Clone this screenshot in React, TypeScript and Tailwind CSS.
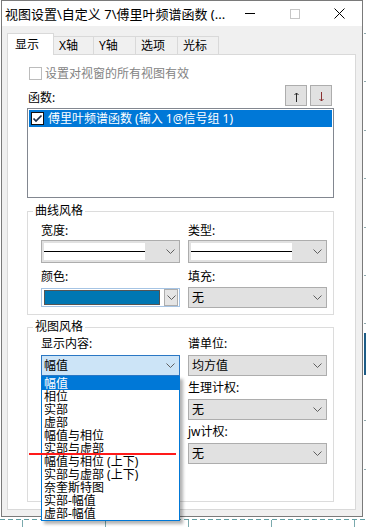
import React from 'react'

const SHOW_ITEMS = [
  '幅值',
  '相位',
  '实部',
  '虚部',
  '幅值与相位',
  '实部与虚部',
  '幅值与相位 (上下)',
  '实部与虚部 (上下)',
  '奈奎斯特图',
  '实部-幅值',
  '虚部-幅值',
]

const TABS = [
  { label: '显示', w: 'w-[47px]', active: true },
  { label: 'X轴', w: 'w-[41px]', active: false },
  { label: 'Y轴', w: 'w-[43px]', active: false },
  { label: '选项', w: 'w-[43px]', active: false },
  { label: '光标', w: 'w-[42px]', active: false },
]

function Chevron() {
  return (
    <svg width="9" height="5" viewBox="0 0 9 5" className="shrink-0">
      <path d="M0.5 0.5 L4.5 4.5 L8.5 0.5" fill="none" stroke="#5f5f5f" strokeWidth="1" />
    </svg>
  )
}

function Combo({ children, className = '' }: { children?: React.ReactNode; className?: string }) {
  return (
    <div className={`h-[21px] flex items-center justify-between border border-[#adadad] bg-[#e1e1e1] pl-[3px] pr-[4px] ${className}`}>
      <span className="leading-[16px] whitespace-nowrap">{children}</span>
      <Chevron />
    </div>
  )
}

function LineCombo() {
  return (
    <div className="mt-[1px] h-[23px] flex items-center justify-between border border-[#adadad] bg-[#e1e1e1] p-[2px] pr-[4px]">
      <div className="w-[101px] h-[17px] bg-white flex items-center">
        <div className="w-full h-[1px] bg-black" />
      </div>
      <Chevron />
    </div>
  )
}

function Label({ children, className = '' }: { children: React.ReactNode; className?: string }) {
  return <div className={`h-[16px] leading-[16px] whitespace-nowrap ${className}`}>{children}</div>
}

function TitleBar() {
  return (
    <div className="h-[25px] bg-white flex items-center">
      <div className="flex-1 pl-[3px] text-[13px] leading-[16px] whitespace-nowrap">
        视图设置\自定义 7\傅里叶频谱函数 (...
      </div>
      <div className="w-[45px] h-full flex items-center justify-center">
        <div className="w-[10px] h-[1px] bg-black" />
      </div>
      <div className="w-[45px] h-full flex items-center justify-center">
        <div className="w-[10px] h-[10px] border border-[#c6c6c6]" />
      </div>
      <div className="w-[45px] h-full flex items-center justify-center">
        <svg width="11" height="11" viewBox="0 0 11 11">
          <path d="M0.5 0.5 L10.5 10.5 M10.5 0.5 L0.5 10.5" stroke="#000" strokeWidth="1" />
        </svg>
      </div>
    </div>
  )
}

function Tabs() {
  return (
    <div className="flex items-end h-[22px] -mb-px">
      {TABS.map((t, i) =>
        t.active ? (
          <div
            key={t.label}
            className={`relative ${t.w} h-[22px] bg-white border border-b-0 border-[#d9d9d9] pl-[7px] pt-[3px] leading-[16px]`}
          >
            {t.label}
          </div>
        ) : (
          <div
            key={t.label}
            className={`${i > 0 ? '-ml-px' : ''} ${t.w} h-[18px] mb-px bg-[#f0f0f0] border border-b-0 border-[#d9d9d9] pl-[5px] pt-[1px] leading-[16px]`}
          >
            {t.label}
          </div>
        )
      )}
    </div>
  )
}

function FunctionList() {
  return (
    <>
      <div className="mt-[12px] flex items-center h-[13px] ml-[2px] gap-[3px]">
        <div className="w-[13px] h-[13px] border border-[#bcbcbc] bg-white" />
        <span className="leading-[16px] text-[#838383]">设置对视窗的所有视图有效</span>
      </div>

      <div className="mt-[5px] flex items-end justify-between">
        <Label className="pl-[1px]">函数:</Label>
        <div className="flex gap-[3px] mr-[2px]">
          <button className="w-[22px] h-[21px] bg-[#e1e1e1] border border-[#adadad] flex items-center justify-center pt-[2px]">
            <svg width="5" height="10" viewBox="0 0 5 10">
              <path d="M2.5 1 V10 M0.5 3 L2.5 1 L4.5 3" fill="none" stroke="#2a2a2a" strokeWidth="1" />
            </svg>
          </button>
          <button className="w-[22px] h-[21px] bg-[#e1e1e1] border border-[#adadad] flex items-center justify-center pt-[2px]">
            <svg width="5" height="10" viewBox="0 0 5 10">
              <path d="M2.5 0 V9 M0.5 7 L2.5 9 L4.5 7" fill="none" stroke="#8a3030" strokeWidth="1" />
            </svg>
          </button>
        </div>
      </div>

      <div className="mt-[2px] h-[90px] border border-[#828790] bg-white p-px">
        <div className="h-[17px] bg-[#0078d7] flex items-center pl-[2px] gap-[4px] text-white">
          <svg width="13" height="13" viewBox="0 0 13 13" className="shrink-0">
            <rect x="0.5" y="0.5" width="12" height="12" fill="#fff" stroke="#111" />
            <path d="M2.5 6.5 L5 9 L10.5 3.5" fill="none" stroke="#1c2c44" strokeWidth="1.7" />
          </svg>
          <span className="leading-[16px] whitespace-nowrap">傅里叶频谱函数 (输入 1@信号组 1)</span>
        </div>
      </div>
    </>
  )
}

function CurveStyle() {
  return (
    <fieldset className="mt-[5px] h-[112px] border border-[#dcdcdc]">
      <legend className="ml-[5px] px-[2px] leading-[16px] bg-white">曲线风格</legend>
      <div className="grid grid-cols-[139px_139px] gap-x-[8px] pl-[13px] pt-[4px]">
        <div>
          <Label>宽度:</Label>
          <LineCombo />
        </div>
        <div>
          <Label>类型:</Label>
          <LineCombo />
        </div>
        <div>
          <Label className="mt-[6px]">颜色:</Label>
          <div className="mt-[3px] h-[19px] border border-[#a6c4e4] bg-white flex items-center pl-[2px] pr-[1px]">
            <div className="w-[116px] h-[15px] border border-[#555] bg-[#0077b3]" />
            <div className="ml-auto w-[14px] h-[17px] bg-[#e5e5e5] border border-[#adadad] flex items-center justify-center">
              <Chevron />
            </div>
          </div>
        </div>
        <div>
          <Label className="mt-[6px]">填充:</Label>
          <Combo className="mt-[2px]">无</Combo>
        </div>
      </div>
    </fieldset>
  )
}

function ViewStyle() {
  return (
    <fieldset className="mt-[4px] h-[183px] border border-[#dcdcdc]">
      <legend className="ml-[5px] px-[2px] leading-[16px] bg-white">视图风格</legend>
      <div className="grid grid-cols-[139px_139px] gap-x-[8px] pl-[13px] pt-[1px] items-start">
        <div>
          <Label>显示内容:</Label>
          <div className="relative mt-[3px]">
            <div className="h-[21px] flex items-center justify-between border border-[#2a77c4] bg-[#cce4f7] pl-[2px] pr-[4px]">
              <span className="leading-[16px]">幅值</span>
              <Chevron />
            </div>
            <div className="absolute left-0 top-full z-10 w-[139px] border border-[#0078d7] bg-white py-0 shadow-[3px_3px_3px_rgba(0,0,0,0.3)]">
              {SHOW_ITEMS.map((item, i) => (
                <div
                  key={item}
                  className={`h-[13px] leading-[13px] pl-[2px] whitespace-nowrap ${i === 0 ? 'bg-[#0078d7] text-white' : ''}`}
                >
                  {item}
                </div>
              ))}
            </div>
          </div>
        </div>
        <div>
          <Label>谱单位:</Label>
          <Combo className="mt-[3px]">均方值</Combo>
          <Label className="mt-[4px]">生理计权:</Label>
          <Combo className="mt-[3px]">无</Combo>
          <Label className="mt-[4px]">jw计权:</Label>
          <Combo className="mt-[3px]">无</Combo>
        </div>
      </div>
    </fieldset>
  )
}

function Window() {
  return (
    <div className="w-[362px] h-[517px] border border-[#7a7a7a] flex flex-col">
      <TitleBar />
      <div className="flex-1 bg-[#f0f0f0] pl-[5px] pt-[7px]">
        <Tabs />
        <div className="w-[349px] h-[456px] bg-white border border-[#d9d9d9] pl-[19px] pr-[21px]">
          <FunctionList />
          <CurveStyle />
          <ViewStyle />
        </div>
      </div>
    </div>
  )
}

function RightStrip() {
  const ticks = Array.from({ length: 11 }, (_, i) => 33 + i * 48.4)
  return (
    <svg width="3" height="517" viewBox="0 0 3 517" className="shrink-0">
      {ticks.map(y => (
        <line key={y} x1="1" x2="3" y1={Math.round(y) + 0.5} y2={Math.round(y) + 0.5} stroke="#8fa9ad" />
      ))}
      <rect x="1" y="333" width="2" height="42" fill="#1d5c86" />
    </svg>
  )
}

function BottomStrip() {
  const ticks = [22, 105, 188, 271, 354]
  return (
    <svg width="366" height="10" viewBox="0 0 366 10" className="shrink-0">
      <line x1="0" x2="366" y1="2.5" y2="2.5" stroke="#5f9ea3" strokeDasharray="5 3" />
      {ticks.map(x => (
        <line key={x} x1={x + 0.5} x2={x + 0.5} y1="3" y2="10" stroke="#7aa9ad" />
      ))}
    </svg>
  )
}

export default function App() {
  return (
    <div className="relative w-[366px] h-[527px] bg-white flex flex-col text-[12px] text-black font-['Noto_Sans','Noto_Sans_CJK_SC',sans-serif]">
      <div className="flex h-[517px]">
        <div className="w-[1px] shrink-0" />
        <Window />
        <RightStrip />
      </div>
      <BottomStrip />
      <div className="absolute left-[29px] top-[453px] w-[147px] h-[2px] bg-[#ff1a1a] z-20" />
    </div>
  )
}
